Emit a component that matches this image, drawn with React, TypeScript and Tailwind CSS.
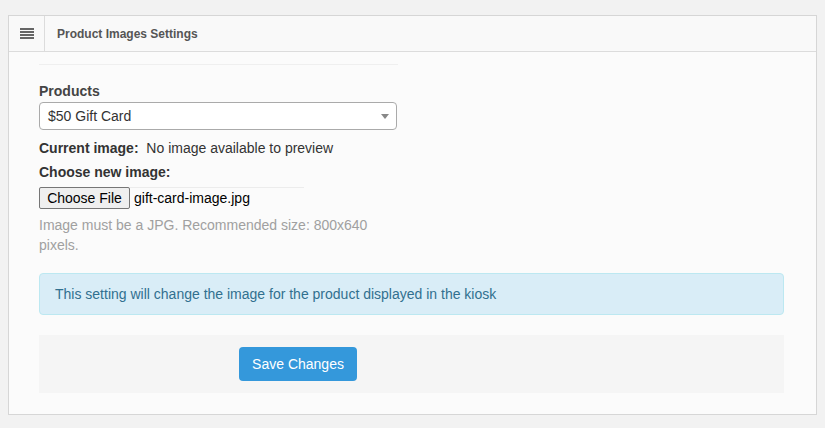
import React from "react";

export default function App() {
  return (
    <div
      className="min-h-[428px] w-[825px] bg-[#f2f2f2] pl-[8px] pt-[15px]"
      style={{ fontFamily: '"Liberation Sans", Arial, sans-serif' }}
    >
      <div className="h-[400px] w-[809px] border border-[#d6d6d6] bg-[#fbfbfb]">
        {/* header */}
        <div className="flex h-[36px] border-b border-[#dcdcdc] bg-[#f9f9f9]">
          <div className="flex w-[36px] items-center justify-center border-r border-[#dcdcdc]">
            <svg width="14" height="11" viewBox="0 0 14 11">
              <rect x="0" y="0" width="14" height="2" fill="#666" />
              <rect x="0" y="3" width="14" height="2" fill="#666" />
              <rect x="0" y="6" width="14" height="2" fill="#666" />
              <rect x="0" y="9" width="14" height="2" fill="#666" />
            </svg>
          </div>
          <div className="flex items-center pl-[12px] text-[12px] font-bold text-[#555]">
            Product Images Settings
          </div>
        </div>

        {/* body */}
        <div className="pl-[30px] pr-[32px]">
          <div className="mt-[12px] h-px w-[359px] bg-[#efefef]" />
          <div className="mt-[16px] w-[358px]">
            <div className="text-[14px] font-bold leading-[20px] text-[#444]">Products</div>
            <div className="relative mt-[1px] flex h-[28px] items-center rounded-[4px] border border-[#aaaaaa] bg-white pl-[8px] text-[14px] text-[#333]">
              $50 Gift Card
              <svg className="absolute right-[7px] top-[11px]" width="8" height="5" viewBox="0 0 8 5">
                <path d="M0 0 L8 0 L4 5 Z" fill="#888" />
              </svg>
            </div>
            <div className="mt-[8px] text-[14px] leading-[20px] text-[#333]">
              <span className="font-bold">Current image:</span>
              <span>&nbsp; No image available to preview</span>
            </div>
            <div className="mt-[4px] text-[14px] font-bold leading-[20px] text-[#333]">
              Choose new image:
            </div>
            <div className="mt-[5px] flex h-[22px] w-[265px] items-stretch border-t border-[#ececec]">
              <div className="-mt-px flex w-[91px] items-center justify-center rounded-[2px] border border-[#767676] bg-[#efefef] text-[14px] text-black">
                Choose File
              </div>
              <div className="flex items-center pl-[4px] text-[14px] text-black">gift-card-image.jpg</div>
            </div>
            <div className="mt-[6px] w-[340px] text-[14px] leading-[20px] text-[#a0a0a0]">
              Image must be a JPG. Recommended size: 800x640 pixels.
            </div>
          </div>

          <div className="mt-[18px] flex h-[42px] items-center rounded-[4px] border border-[#bce8f1] bg-[#d9edf7] pl-[15px] text-[14px] text-[#31708f]">
            This setting will change the image for the product displayed in the kiosk
          </div>

          <div className="mt-[20px] h-[58px] bg-[#f5f5f5] pl-[200px] pt-[12px]">
            <button className="h-[34px] w-[118px] rounded-[4px] bg-[#3498db] text-[14px] text-white">
              Save Changes
            </button>
          </div>
        </div>
      </div>
    </div>
  );
}
